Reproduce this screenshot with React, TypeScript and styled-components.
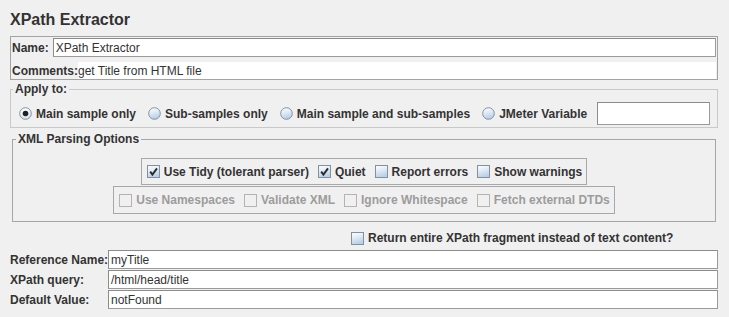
import React, { useId } from 'react';
import styled, { createGlobalStyle } from 'styled-components';

const GlobalStyle = createGlobalStyle`
  html, body { margin: 0; padding: 0; background: #f0f0f0; }
  body {
    font-family: "Liberation Sans", Arial, sans-serif;
    font-size: 12px;
    color: #333333;
  }
`;

const Page = styled.div`
  width: 729px;
  box-sizing: border-box;
  padding: 10px 11px 0 10px;
  display: flex;
  flex-direction: column;
`;

const Title = styled.h1`
  margin: 0 0 6px 0;
  font-size: 16px;
  line-height: 20px;
  font-weight: bold;
  color: #333333;
`;

const NamePanel = styled.div`
  border: 1px solid #a3a3a3;
  display: flex;
  flex-direction: column;
`;

const NameRow = styled.div`
  display: flex;
  align-items: center;
  gap: 4px;
  padding: 1px 1px 0 1px;
`;

const CommentsRow = styled.div`
  display: flex;
  align-items: center;
  height: 17px;
  margin-top: 5px;
  padding: 0 1px;
`;

const CommentArea = styled.div`
  flex: 1;
  align-self: stretch;
  background: #ffffff;
  display: flex;
  align-items: center;
  white-space: nowrap;
`;

const Label = styled.span`
  font-weight: bold;
  color: #333333;
  white-space: nowrap;
  line-height: 14px;
`;

const TextBox = styled.div<{ $h?: number }>`
  flex: 1;
  height: ${(p) => p.$h ?? 19}px;
  box-sizing: border-box;
  border: 1px solid #8c8c8c;
  border-right-color: #9a9a9a;
  border-bottom-color: #9a9a9a;
  background: #ffffff;
  padding: 0 2px;
  display: flex;
  align-items: center;
  color: #333333;
  white-space: nowrap;
  overflow: hidden;
`;

const VarField = styled(TextBox)`
  flex: none;
  width: 113px;
  margin-left: -2px;
`;

const Group = styled.fieldset<{ $dark?: boolean; $inset?: number }>`
  margin: ${(p) => (p.$dark ? '4px' : '2px')} ${(p) => p.$inset ?? 0}px 0 ${(p) => p.$inset ?? 0}px;
  padding: 0;
  min-width: 0;
  border: 1px solid ${(p) => (p.$dark ? '#a6a6a6' : '#c9c9c9')};
`;

const Legend = styled.legend<{ $offset: number }>`
  margin-left: ${(p) => p.$offset}px;
  padding: 0 2px;
  font-weight: bold;
  font-size: 12px;
  line-height: 14px;
  color: #333333;
`;

const RadioRow = styled.div`
  display: flex;
  align-items: center;
  gap: 12px;
  height: 23px;
  padding: 6px 0 2px 8px;
`;

const Option = styled.span<{ $disabled?: boolean }>`
  display: inline-flex;
  align-items: center;
  gap: 4px;
  font-weight: bold;
  white-space: nowrap;
  line-height: 14px;
  color: ${(p) => (p.$disabled ? '#9c9c9c' : '#333333')};
`;

const XmlBody = styled.div`
  display: flex;
  flex-direction: column;
  align-items: center;
  gap: 1px;
  padding: 12px 0 7px 0;
`;

const OptionBox = styled.div<{ $h: number }>`
  display: flex;
  align-items: center;
  gap: 9px;
  height: ${(p) => p.$h}px;
  box-sizing: border-box;
  padding: 0 4px 0 5px;
  border: 1px solid #a8a8a8;
`;

const ReturnRow = styled.div`
  display: flex;
  padding: 9px 0 5px 341px;
`;

const FormGrid = styled.div`
  display: grid;
  grid-template-columns: 98px 1fr;
  row-gap: 1px;
  align-items: center;
`;

const IconSvg = styled.svg`
  flex: none;
  display: block;
`;

function CheckBox({ checked, disabled }: { checked?: boolean; disabled?: boolean }) {
  const id = useId().replace(/:/g, '');
  return (
    <IconSvg width="13" height="13" viewBox="0 0 13 13">
      <defs>
        <linearGradient id={`cb${id}`} x1="0" y1="0" x2="0.3" y2="1">
          <stop offset="0" stopColor="#ffffff" />
          <stop offset="0.45" stopColor="#e3edf6" />
          <stop offset="1" stopColor="#b9d0e6" />
        </linearGradient>
      </defs>
      <rect
        x="0.5"
        y="0.5"
        width="12"
        height="12"
        fill={disabled ? 'none' : `url(#cb${id})`}
        stroke={disabled ? '#b4b4b4' : '#8291a0'}
      />
      {checked && (
        <path d="M3.2 6.6 L5.4 9.6 L10 3.4" stroke="#2a2a2a" strokeWidth="1.9" fill="none" />
      )}
    </IconSvg>
  );
}

function Radio({ selected }: { selected?: boolean }) {
  const id = useId().replace(/:/g, '');
  return (
    <IconSvg width="13" height="13" viewBox="0 0 13 13">
      <defs>
        <linearGradient id={`rb${id}`} x1="0" y1="0" x2="0.3" y2="1">
          <stop offset="0" stopColor="#ffffff" />
          <stop offset="0.45" stopColor={selected ? '#f4f7fa' : '#e3edf6'} />
          <stop offset="1" stopColor={selected ? '#d9e4ee' : '#b9d0e6'} />
        </linearGradient>
      </defs>
      <circle cx="6.5" cy="6.5" r="5.8" fill={`url(#rb${id})`} stroke="#8291a0" />
      {selected && <circle cx="6.5" cy="6.5" r="2.8" fill="#222222" />}
    </IconSvg>
  );
}

export default function App() {
  return (
    <>
      <GlobalStyle />
      <Page>
        <Title>XPath Extractor</Title>

        <NamePanel>
          <NameRow>
            <Label>Name:</Label>
            <TextBox>XPath Extractor</TextBox>
          </NameRow>
          <CommentsRow>
            <Label>Comments:</Label>
            <CommentArea>get Title from HTML file</CommentArea>
          </CommentsRow>
        </NamePanel>

        <Group>
          <Legend $offset={2}>Apply to:</Legend>
          <RadioRow>
            <Option>
              <Radio selected />
              Main sample only
            </Option>
            <Option>
              <Radio />
              Sub-samples only
            </Option>
            <Option>
              <Radio />
              Main sample and sub-samples
            </Option>
            <Option>
              <Radio />
              JMeter Variable
            </Option>
            <VarField $h={23} />
          </RadioRow>
        </Group>

        <Group $dark $inset={2}>
          <Legend $offset={3}>XML Parsing Options</Legend>
          <XmlBody>
            <OptionBox $h={27}>
              <Option>
                <CheckBox checked />
                Use Tidy (tolerant parser)
              </Option>
              <Option>
                <CheckBox checked />
                Quiet
              </Option>
              <Option>
                <CheckBox />
                Report errors
              </Option>
              <Option>
                <CheckBox />
                Show warnings
              </Option>
            </OptionBox>
            <OptionBox $h={28}>
              <Option $disabled>
                <CheckBox disabled />
                Use Namespaces
              </Option>
              <Option $disabled>
                <CheckBox disabled />
                Validate XML
              </Option>
              <Option $disabled>
                <CheckBox disabled />
                Ignore Whitespace
              </Option>
              <Option $disabled>
                <CheckBox disabled />
                Fetch external DTDs
              </Option>
            </OptionBox>
          </XmlBody>
        </Group>

        <ReturnRow>
          <Option>
            <CheckBox />
            Return entire XPath fragment instead of text content?
          </Option>
        </ReturnRow>

        <FormGrid>
          <Label>Reference Name:</Label>
          <TextBox>myTitle</TextBox>
          <Label>XPath query:</Label>
          <TextBox>/html/head/title</TextBox>
          <Label>Default Value:</Label>
          <TextBox>notFound</TextBox>
        </FormGrid>
      </Page>
    </>
  );
}
